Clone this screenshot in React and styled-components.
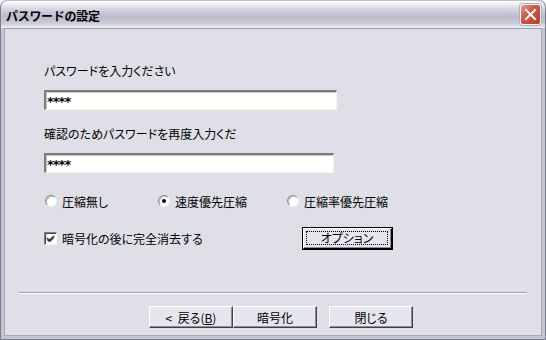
import styled, { createGlobalStyle } from 'styled-components';

const GlobalStyle = createGlobalStyle`
  html, body {
    margin: 0;
    padding: 0;
    background: #ffffff;
  }
  body {
    font-family: "Noto Sans CJK JP", "Noto Sans", sans-serif;
    font-size: 12px;
    color: #000;
  }
`

const Window = styled.div`
  width: 546px;
  height: 340px;
  box-sizing: border-box;
  display: flex;
  flex-direction: column;
  border-radius: 7px 7px 0 0;
  background: #c4c4d2;
  border: 1px solid #7d7d92;
  border-top: none;
  overflow: hidden;
`

const TitleBar = styled.div`
  height: 27px;
  flex-shrink: 0;
  display: flex;
  align-items: center;
  justify-content: space-between;
  padding: 0 4px 0 5px;
  border-radius: 7px 7px 0 0;
  background: linear-gradient(to bottom,
    #ffffff 0%, #f1f1f5 10%, #dcdce6 25%, #c6c6d4 45%,
    #bcbccc 60%, #c9c9d6 80%, #e4e4ec 95%, #f2f2f6 100%);
  border-top: 1px solid #c0c0cc;
`

const Title = styled.span`
  font-weight: bold;
  font-size: 12px;
  letter-spacing: -0.3px;
  margin-top: 1px;
`

const CloseButton = styled.div`
  width: 21px;
  height: 21px;
  box-sizing: border-box;
  border: 1px solid #ffffff;
  border-radius: 3px;
  background: linear-gradient(135deg, #e79a8a 0%, #d05a48 40%, #bf3a2a 100%);
  display: flex;
  align-items: center;
  justify-content: center;
  box-shadow: 0 0 0 1px #b0b0c0;
`

const Client = styled.div`
  flex: 1;
  margin: 0 3px 3px;
  background: #dfdfe7;
  border: 1px solid #a8a8b8;
  border-top: 1px solid #9a9aae;
  display: flex;
  flex-direction: column;
  padding: 35px 0 0 39px;
`

const Label = styled.div`
  line-height: 14px;
  height: 14px;
  margin-top: ${p => p.$top}px;
  font-feature-settings: "palt";
`

const TextBox = styled.div`
  width: ${p => p.$width}px;
  height: 20px;
  box-sizing: border-box;
  margin-top: 12px;
  background: #fffffb;
  border-top: 2px solid #7b7b7b;
  border-left: 2px solid #7b7b7b;
  border-right: 1px solid #f4f4ec;
  border-bottom: 1px solid #f4f4ec;
  box-shadow: inset 1px 1px 0 #c8c8c8;
  font-family: "DejaVu Sans", sans-serif;
  font-weight: bold;
  font-size: 13px;
  line-height: 19px;
  padding-left: 1px;
  letter-spacing: -1px;
`

const RadioRow = styled.div`
  display: flex;
  align-items: center;
  height: 14px;
  margin-top: 21px;
  padding-left: 1px;
`

const Choice = styled.label`
  display: flex;
  align-items: center;
  gap: 5px;
  width: ${p => p.$width}px;
  font-feature-settings: "palt";
`

const RadioDot = styled.span`
  width: 12px;
  height: 12px;
  box-sizing: border-box;
  border-radius: 50%;
  background: #ffffff;
  border: 1px solid;
  border-color: #8a8a8a #f0f0f0 #f0f0f0 #8a8a8a;
  box-shadow: inset 1px 1px 0 #c0c0c0;
  display: flex;
  align-items: center;
  justify-content: center;
  &::after {
    content: "";
    width: 4px;
    height: 4px;
    border-radius: 50%;
    background: ${p => (p.$checked ? '#000' : 'transparent')};
  }
`

const ActionRow = styled.div`
  display: flex;
  align-items: center;
  height: 22px;
  margin-top: 19px;
`

const CheckLabel = styled.label`
  display: flex;
  align-items: center;
  gap: 5px;
  width: 259px;
  font-feature-settings: "palt";
`

const CheckBox = styled.span`
  width: 13px;
  height: 13px;
  box-sizing: border-box;
  background: #ffffff;
  border: 1px solid;
  border-color: #808080 #f4f4f4 #f4f4f4 #808080;
  box-shadow: inset 1px 1px 0 #404040;
  display: flex;
  align-items: center;
  justify-content: center;
`

const Button = styled.div`
  width: ${p => p.$width || 84}px;
  height: ${p => p.$height || 22}px;
  box-sizing: border-box;
  display: flex;
  align-items: center;
  justify-content: center;
  background: #e6e6ee;
  border: 1px solid;
  border-color: #ffffff #404040 #404040 #ffffff;
  box-shadow: inset -1px -1px 0 #8c8c9c;
  font-feature-settings: "palt";
  white-space: pre;
  ${p => p.$default && `
    outline: 1px solid #000;
    outline-offset: 0;
    border-color: #ffffff #000 #000 #ffffff;
  `}
`

const FocusRing = styled.span`
  flex: 1;
  align-self: stretch;
  margin: 2px 3px 3px 2px;
  border: 1px dotted #000;
  display: flex;
  align-items: center;
  justify-content: center;
  line-height: 12px;
`

const Separator = styled.div`
  margin: 43px 14px 0 -25px;
  height: 0;
  border-top: 1px solid #9d9daf;
  border-bottom: 1px solid #ffffff;
`

const Footer = styled.div`
  display: flex;
  margin: 12px 0 0 105px;
`

const Gap = styled.div`
  width: ${p => p.$w}px;
`

const Underline = styled.span`
  text-decoration: underline;
`

export default function App() {
  return (
    <>
      <GlobalStyle />
      <Window>
        <TitleBar>
          <Title>パスワードの設定</Title>
          <CloseButton>
            <svg width="13" height="13" viewBox="0 0 13 13">
              <path d="M2 2 L11 11 M11 2 L2 11" stroke="#fff" strokeWidth="2" strokeLinecap="square" />
            </svg>
          </CloseButton>
        </TitleBar>
        <Client>
          <Label $top={0}>パスワードを入力ください</Label>
          <TextBox $width={293}>****</TextBox>
          <Label $top={17}>確認のためパスワードを再度入力くだ</Label>
          <TextBox $width={290}>****</TextBox>
          <RadioRow>
            <Choice $width={113}><RadioDot />圧縮無し</Choice>
            <Choice $width={129}><RadioDot $checked />速度優先圧縮</Choice>
            <Choice $width={130}><RadioDot />圧縮率優先圧縮</Choice>
          </RadioRow>
          <ActionRow>
            <CheckLabel>
              <CheckBox>
                <svg width="9" height="9" viewBox="0 0 9 9">
                  <path d="M1 3.5 L3.5 6 L8 1.5 M1 4.5 L3.5 7 L8 2.5 M1 5.5 L3.5 8 L8 3.5" stroke="#000" strokeWidth="1" fill="none" />
                </svg>
              </CheckBox>
              暗号化の後に完全消去する
            </CheckLabel>
            <Button $width={89} $height={21} $default>
              <FocusRing>オプション</FocusRing>
            </Button>
          </ActionRow>
          <Separator />
          <Footer>
            <Button $width={84}>{'<  戻る('}<Underline>B</Underline>)</Button>
            <Button $width={84}>暗号化</Button>
            <Gap $w={12} />
            <Button $width={84}>閉じる</Button>
          </Footer>
        </Client>
      </Window>
    </>
  );
}
